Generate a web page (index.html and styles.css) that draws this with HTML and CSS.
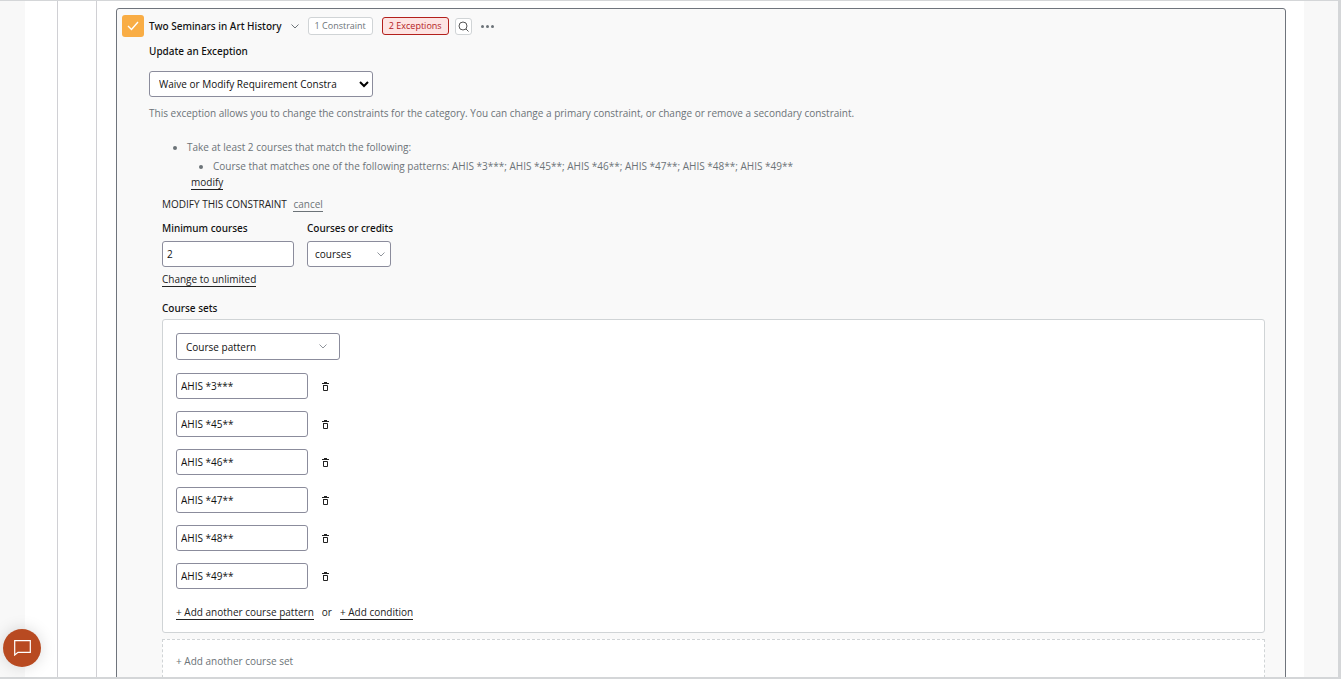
FILE: index.html
```html
<!DOCTYPE html>
<html lang="en">
<head>
	<meta charset="UTF-8">
	<title>Update an Exception</title>
	<link rel="stylesheet" href="styles.css">
</head>
<body>
	<svg class="sprite" aria-hidden="true">
		<symbol id="trash" viewBox="0 0 7 9">
			<path d="M0 1.5h7M2 0.5h3M1.5 3v5.500h4V3.500h-4" fill="none" stroke="currentColor"/>
		</symbol>
		<symbol id="chevron" viewBox="0 0 8 5">
			<path d="M0.5 0.5L4 4L7.5 0.5" fill="none" stroke="currentColor"/>
		</symbol>
	</svg>

	<div class="frame">
		<main class="page">
			<div class="level">
				<div class="level-inner">
					<section class="card">
						<header class="card-header">
							<span class="status">
								<svg width="12" height="10" viewBox="0 0 12 10"><path d="M1 5L4.500 8.500L11 1" fill="none" stroke="#fff" stroke-width="1.400"/></svg>
							</span>
							<h2>Two Seminars in Art History</h2>
							<button type="button" class="toggle" aria-label="Collapse">
								<svg width="8" height="5"><use href="#chevron"/></svg>
							</button>
							<span class="tag">1 Constraint</span>
							<span class="tag tag-error">2 Exceptions</span>
							<button type="button" class="search" aria-label="Search">
								<svg width="11" height="11" viewBox="0 0 11 11"><circle cx="5" cy="5" r="4" fill="none" stroke="currentColor"/><path d="M8 8l2.500 2.500" stroke="currentColor"/></svg>
							</button>
							<button type="button" class="more" aria-label="More">
								<svg width="13" height="3" viewBox="0 0 13 3"><circle cx="1.500" cy="1.500" r="1.500"/><circle cx="6.500" cy="1.500" r="1.500"/><circle cx="11.500" cy="1.500" r="1.500"/></svg>
							</button>
						</header>

						<form class="exception">
							<h3><label for="exception-type">Update an Exception</label></h3>
							<div class="select select-type">
								<select id="exception-type">
									<option>Waive or Modify Requirement Constra</option>
								</select>
								<svg width="10" height="7" viewBox="0 0 10 7"><path d="M1 1L5 5L9 1" fill="none" stroke="#000" stroke-width="2"/></svg>
							</div>
							<p class="hint">This exception allows you to change the constraints for the category. You can change a primary constraint, or change or remove a secondary constraint.</p>

							<ul class="rules">
								<li>Take at least 2 courses that match the following:
									<ul>
										<li>Course that matches one of the following patterns: AHIS *3***; AHIS *45**; AHIS *46**; AHIS *47**; AHIS *48**; AHIS *49**</li>
									</ul>
									<a href="#" class="link modify">modify</a>
								</li>
							</ul>

							<div class="constraint">
								<p class="constraint-title">MODIFY THIS CONSTRAINT <a href="#" class="link link-muted">cancel</a></p>
								<div class="fields">
									<div class="field">
										<label for="min-courses">Minimum courses</label>
										<input type="text" id="min-courses" value="2">
									</div>
									<div class="field">
										<label for="unit">Courses or credits</label>
										<div class="select select-unit">
											<select id="unit">
												<option>courses</option>
												<option>credits</option>
											</select>
											<svg width="8" height="5"><use href="#chevron"/></svg>
										</div>
									</div>
								</div>
								<a href="#" class="link">Change to unlimited</a>

								<h4>Course sets</h4>
								<div class="set">
									<div class="select select-pattern">
										<select aria-label="Course set type">
											<option>Course pattern</option>
										</select>
										<svg width="8" height="5"><use href="#chevron"/></svg>
									</div>
									<ul class="patterns">
										<li>
											<input type="text" aria-label="Pattern 1" value="AHIS *3***">
											<button type="button" aria-label="Delete"><svg width="7" height="9"><use href="#trash"/></svg></button>
										</li>
										<li>
											<input type="text" aria-label="Pattern 2" value="AHIS *45**">
											<button type="button" aria-label="Delete"><svg width="7" height="9"><use href="#trash"/></svg></button>
										</li>
										<li>
											<input type="text" aria-label="Pattern 3" value="AHIS *46**">
											<button type="button" aria-label="Delete"><svg width="7" height="9"><use href="#trash"/></svg></button>
										</li>
										<li>
											<input type="text" aria-label="Pattern 4" value="AHIS *47**">
											<button type="button" aria-label="Delete"><svg width="7" height="9"><use href="#trash"/></svg></button>
										</li>
										<li>
											<input type="text" aria-label="Pattern 5" value="AHIS *48**">
											<button type="button" aria-label="Delete"><svg width="7" height="9"><use href="#trash"/></svg></button>
										</li>
										<li>
											<input type="text" aria-label="Pattern 6" value="AHIS *49**">
											<button type="button" aria-label="Delete"><svg width="7" height="9"><use href="#trash"/></svg></button>
										</li>
									</ul>
									<div class="set-links">
										<a href="#" class="link">+ Add another course pattern</a>
										<span>or</span>
										<a href="#" class="link">+ Add condition</a>
									</div>
								</div>
								<button type="button" class="add-set">+ Add another course set</button>
							</div>
						</form>
					</section>
				</div>
			</div>
		</main>
	</div>

	<button type="button" class="chat" aria-label="Chat">
		<svg width="17" height="16" viewBox="0 0 17 16"><path d="M0.700 15V0.700h15.600v11.600H4z" fill="none" stroke="#fff" stroke-width="1.200"/></svg>
	</button>
</body>
</html>
```
FILE: styles.css
```css
* {
	box-sizing: border-box;
}
body {
	margin: 0;
	padding-right: 2px;
	height: 100vh;
	overflow: hidden;
	font: 10px/16px "Open Sans", "Noto Sans", sans-serif;
	color: #222;
}
h2,
h3,
h4,
p,
ul {
	margin: 0;
	padding: 0;
	font-size: inherit;
}
h2,
h3,
h4,
label {
	font-family: "Noto Sans", sans-serif;
	font-weight: 500;
	color: #111;
}
.sprite {
	display: none;
}
.frame {
	height: 100%;
	overflow: hidden;
	border: solid #d4d6d8;
	border-width: 1px 3px 2px 0;
	padding: 0 34px 0 25px;
	background-color: #f8f8f8;
}
.page {
	padding: 0 18px 0 32px;
	background-color: #fff;
}
.level {
	padding-left: 38px;
	border-left: 1px solid #d0d0d4;
}
.level-inner {
	padding: 7px 0 0 19px;
	border-left: 1px solid #d0d0d4;
}
.card {
	padding: 6px 20px 0 5px;
	border: 1px solid #6f747c;
	border-radius: 3px;
	background-color: #f9f9f9;
}
.card-header {
	display: flex;
	align-items: center;
	height: 22px;
}
.status {
	display: flex;
	align-items: center;
	justify-content: center;
	margin-right: 5px;
	width: 22px;
	height: 22px;
	border-radius: 3px;
	background-color: #f9ad45;
}
button {
	padding: 0;
	border: none;
	background: none;
	font: inherit;
	color: inherit;
	cursor: pointer;
}
button svg {
	display: block;
}
.toggle {
	margin: 0 9px;
	color: #6c7378;
}
.tag {
	margin-right: 9px;
	padding: 0 6px;
	border: 1px solid #d0d4d6;
	border-radius: 3px;
	background-color: #fff;
	font-size: 9px;
	color: #6c7378;
}
.tag-error {
	margin-right: 6px;
	border-color: #b3201c;
	background-color: #fde4e3;
	color: #b3201c;
}
.search {
	margin-right: 9px;
	padding: 2px;
	border: 1px solid #d0d4d6;
	border-radius: 3px;
	background-color: #fff;
	color: #555;
}
.more {
	fill: #6c7378;
}
.exception {
	padding-left: 27px;
}
.exception h3 {
	margin: 6px 0 12px;
}
select,
input {
	width: 100%;
	height: 26px;
	border: 1px solid #8b8c9c;
	border-radius: 3px;
	background-color: #fff;
	font: inherit;
	color: #111;
	appearance: none;
}
input {
	padding: 0 4px;
}
.select {
	display: grid;
	align-items: center;
}
.select select,
.select svg {
	grid-area: 1 / 1;
}
.select svg {
	justify-self: end;
	color: #90959c;
	pointer-events: none;
}
.select-type {
	width: 224px;
}
.select-type select {
	padding: 0 9px;
}
.select-type svg {
	margin-right: 4px;
}
.hint {
	margin-top: 8px;
	color: #6c7378;
}
.rules {
	margin-top: 18px;
	padding-left: 38px;
	color: #6c7378;
}
.rules ul {
	margin-top: 3px;
	padding-left: 26px;
	list-style: disc;
}
.link {
	display: inline-block;
	border-bottom: 1px solid #222;
	line-height: 13px;
	color: #222;
	text-decoration: none;
}
.link-muted {
	margin-left: 4px;
	border-color: #6c7378;
	color: #6c7378;
}
.modify {
	margin-left: 4px;
}
.constraint {
	padding-left: 13px;
}
.constraint-title {
	margin-top: 6px;
}
.fields {
	display: flex;
	gap: 13px;
	margin: 8px 0 4px;
}
.field input {
	display: block;
	width: 132px;
}
.field label {
	display: block;
	margin-bottom: 5px;
}
.select-unit {
	width: 84px;
}
.select-unit select {
	padding: 0 7px;
}
.select-unit svg {
	margin-right: 6px;
}
.constraint h4 {
	margin: 13px 0 3px;
}
.set {
	padding: 13px 13px 12px;
	border: 1px solid #d0d4d6;
	border-radius: 3px;
	background-color: #fff;
}
.select-pattern {
	width: 164px;
}
.select-pattern select {
	padding: 0 9px;
	height: 27px;
}
.select-pattern svg {
	margin-right: 13px;
}
.patterns {
	display: grid;
	gap: 12px;
	margin: 13px 0 15px;
	list-style: none;
}
.patterns li {
	display: flex;
	align-items: center;
	gap: 14px;
}
.patterns input {
	width: 132px;
}
.set-links {
	display: flex;
	align-items: baseline;
	gap: 8px;
}
.add-set {
	display: block;
	margin-top: 6px;
	padding: 13px;
	width: 100%;
	border: 1px dashed #d0d4d6;
	background-color: #fff;
	text-align: left;
	color: #6c7378;
}
.chat {
	position: fixed;
	left: 3px;
	bottom: 12px;
	display: flex;
	align-items: center;
	justify-content: center;
	width: 38px;
	height: 38px;
	border-radius: 50%;
	background-color: #b84a21;
	box-shadow: 0 0 16px rgba(0, 0, 0, .15);
}
```
